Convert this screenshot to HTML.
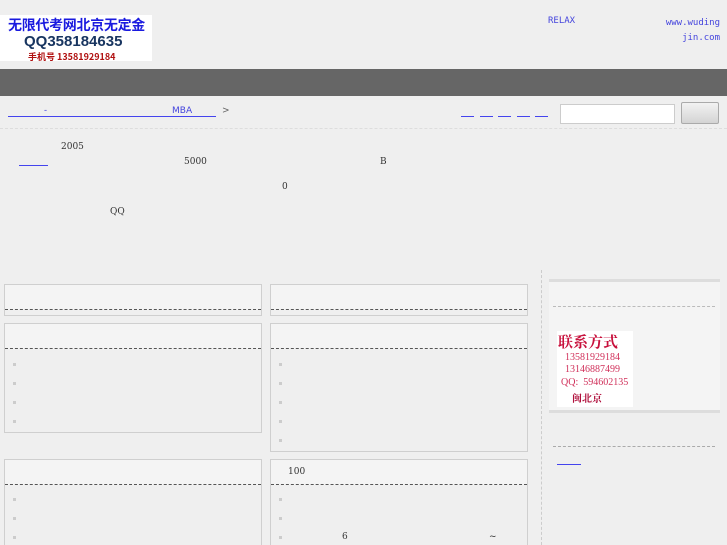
<!DOCTYPE html>
<html><head><meta charset="utf-8"><style>
*{margin:0;padding:0;box-sizing:border-box}
html{overflow:hidden;width:727px;height:545px}
body{width:727px;height:545px;background:#efefef;position:relative;overflow:hidden;font-family:"DejaVu Serif","Noto Serif CJK SC",serif;font-size:9px;color:#333}
.a{position:absolute}
.blue{color:#4444dd}
.ul{position:absolute;height:1px;background:#4444ee}
.panel{position:absolute;border:1px solid #cfcfcf;background:#efefef}
.panel .h{height:25px;background:#f4f4f4;border-bottom:1px dashed #555}
.dot{position:absolute;width:3px;height:3px;background:#ccc}
</style></head><body>
<div class="a" style="left:0;top:15px;width:152px;height:46px;background:#fff"></div>
<div class="a" style="left:8px;top:15px;font:bold 14px 'Noto Sans CJK SC',sans-serif;color:#1a1adf;letter-spacing:-0.3px">无限代考网北京无定金</div>
<div class="a" style="left:24px;top:33px;font:bold 15px 'Liberation Sans',sans-serif;color:#183560">QQ358184635</div>
<div class="a" style="left:28px;top:50px;font:bold 9px 'Noto Sans CJK SC',sans-serif;color:#b01010">手机号 13581929184</div>
<div class="a blue" style="left:548px;top:16px;font-family:'DejaVu Sans Mono',monospace">RELAX</div>
<div class="a blue" style="left:650px;top:16px;font-family:'DejaVu Sans Mono',monospace;text-align:right;width:70px;line-height:15px">www.wuding<br>jin.com</div>
<div class="a" style="left:0;top:69px;width:727px;height:27px;background:#666"></div>
<div class="ul" style="left:8px;top:116px;width:208px"></div>
<div class="a blue" style="left:44px;top:106px">-</div>
<div class="a blue" style="left:172px;top:106px;font-family:'DejaVu Sans',sans-serif">MBA</div>
<div class="a" style="left:222px;top:106px;color:#666">&gt;</div>
<div class="ul" style="left:461px;top:116px;width:13px"></div>
<div class="ul" style="left:480px;top:116px;width:13px"></div>
<div class="ul" style="left:498px;top:116px;width:13px"></div>
<div class="ul" style="left:517px;top:116px;width:13px"></div>
<div class="ul" style="left:535px;top:116px;width:13px"></div>
<div class="a" style="left:560px;top:104px;width:115px;height:20px;background:#fff;border:1px solid #ccc"></div>
<div class="a" style="left:681px;top:102px;width:38px;height:22px;background:linear-gradient(#f2f2f2,#d4d4d4);border:1px solid #aaa;border-radius:2px"></div>
<div class="a" style="left:0;top:128px;width:727px;border-top:1px dashed #ddd"></div>
<div class="a" style="left:61px;top:142px">2005</div>
<div class="ul" style="left:19px;top:165px;width:29px"></div>
<div class="a" style="left:184px;top:157px">5000</div>
<div class="a" style="left:380px;top:157px">B</div>
<div class="a" style="left:282px;top:182px">0</div>
<div class="a" style="left:110px;top:207px">QQ</div>
<div class="a" style="left:541px;top:270px;height:275px;border-left:1px dashed #ccc"></div>
<div class="panel" style="left:4px;top:284px;width:258px;height:32px"><div class="h"></div></div>
<div class="panel" style="left:270px;top:284px;width:258px;height:32px"><div class="h"></div></div>
<div class="panel" style="left:4px;top:323px;width:258px;height:110px"><div class="h"></div></div>
<div class="panel" style="left:270px;top:323px;width:258px;height:129px"><div class="h"></div></div>
<div class="panel" style="left:4px;top:459px;width:258px;height:100px"><div class="h"></div></div>
<div class="panel" style="left:270px;top:459px;width:258px;height:100px"><div class="h"></div></div>
<div class="a" style="left:288px;top:467px">100</div>
<div class="a" style="left:342px;top:532px">6</div>
<div class="a" style="left:489px;top:532px">~</div>
<div class="dot" style="left:13px;top:363px"></div><div class="dot" style="left:13px;top:382px"></div><div class="dot" style="left:13px;top:401px"></div><div class="dot" style="left:13px;top:420px"></div>
<div class="dot" style="left:279px;top:363px"></div><div class="dot" style="left:279px;top:382px"></div><div class="dot" style="left:279px;top:401px"></div><div class="dot" style="left:279px;top:420px"></div><div class="dot" style="left:279px;top:439px"></div>
<div class="dot" style="left:13px;top:498px"></div><div class="dot" style="left:13px;top:517px"></div><div class="dot" style="left:13px;top:536px"></div>
<div class="dot" style="left:279px;top:498px"></div><div class="dot" style="left:279px;top:517px"></div><div class="dot" style="left:279px;top:536px"></div>
<div class="a" style="left:549px;top:279px;width:171px;height:134px;background:#f4f4f4;border-top:3px solid #ddd;border-bottom:3px solid #ddd"></div>
<div class="a" style="left:553px;top:306px;width:162px;border-top:1px dashed #bbb"></div>
<div class="a" style="left:557px;top:331px;width:76px;height:76px;background:#fff"></div>
<div class="a" style="left:558px;top:331px;font:bold 15px 'Noto Serif CJK SC',serif;color:#c8103c">联系方式</div>
<div class="a" style="left:565px;top:352px;font-family:'Liberation Serif',serif;font-size:10px;color:#d0305a;line-height:12px">13581929184<br>13146887499</div>
<div class="a" style="left:561px;top:377px;font-family:'Liberation Serif',serif;font-size:10px;color:#d0305a">QQ:&nbsp; 594602135</div>
<div class="a" style="left:572px;top:390px;font:bold 10px 'Noto Serif CJK SC',serif;color:#b0103c">闽北京</div>
<div class="a" style="left:553px;top:446px;width:162px;border-top:1px dashed #aaa"></div>
<div class="ul" style="left:557px;top:464px;width:24px"></div>
</body></html>
